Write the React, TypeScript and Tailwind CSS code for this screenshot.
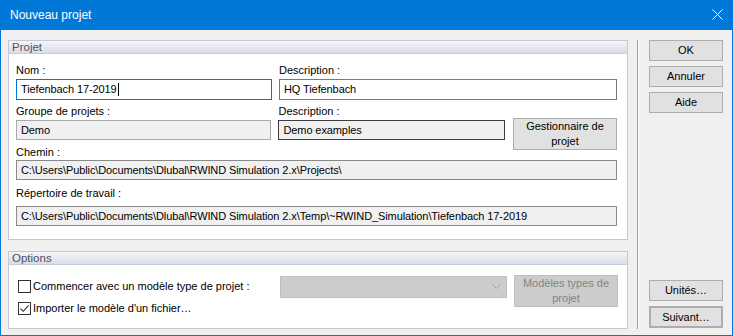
import React from "react";

const font = { fontFamily: '"Liberation Sans", Arial, sans-serif' };

function Frame({ title, className, children }: { title: string; className?: string; children: React.ReactNode }) {
  return (
    <div className={"flex flex-col border border-[#c4c8d6] bg-white " + (className ?? "")}>
      <div className="h-[13px] shrink-0 border-b border-[#c9ccd9] bg-gradient-to-b from-[#f6f6f9] to-[#dadce7] pl-[3px] text-[11.5px] leading-[13px] text-[#4f5163]">
        {title}
      </div>
      {children}
    </div>
  );
}

function Btn({ children, className }: { children: React.ReactNode; className?: string }) {
  return (
    <div className={"flex items-center justify-center border border-[#adadad] bg-[#e1e1e1] text-center text-[11px] leading-[15px] text-black " + (className ?? "")}>
      {children}
    </div>
  );
}

function Field({ children, className }: { children: React.ReactNode; className?: string }) {
  return (
    <div className={"flex items-center whitespace-nowrap pl-[4px] text-[11px] tracking-[-0.1px] text-black " + (className ?? "")}>
      {children}
    </div>
  );
}

function Label({ children, className }: { children: React.ReactNode; className?: string }) {
  return <div className={"h-[14px] text-[11px] leading-[14px] text-black " + (className ?? "")}>{children}</div>;
}

function CheckBox({ checked }: { checked?: boolean }) {
  return (
    <div className="flex h-[13px] w-[13px] shrink-0 items-center justify-center border border-[#333333] bg-white">
      {checked && (
        <svg width="11" height="11" viewBox="0 0 11 11">
          <path d="M1.5 5.5 L4.2 8.3 L9.6 2.3" fill="none" stroke="#333" strokeWidth="1.1" />
        </svg>
      )}
    </div>
  );
}

export default function App() {
  return (
    <div style={font} className="flex h-[336px] w-[733px] flex-col border-x border-b border-[#0078d7] bg-[#f0f0f0]">
      {/* Title bar */}
      <div className="flex h-[30px] shrink-0 items-center justify-between bg-[#0078d7] pl-[9px] pr-[9px] text-white">
        <span className="text-[12px] leading-[14px]">Nouveau projet</span>
        <svg width="11" height="11" viewBox="0 0 11 11" className="mb-[1px]">
          <path d="M0.5 0.5 L10.5 10.5 M10.5 0.5 L0.5 10.5" stroke="white" strokeWidth="1" />
        </svg>
      </div>

      {/* Body */}
      <div className="flex flex-1 pl-[7px] pt-[10px] pb-[6px]">
        {/* Left column */}
        <div className="flex w-[620px] flex-col">
          <Frame title="Projet" className="h-[200px]">
            <div className="flex flex-col pl-[7px] pr-[10px]">
              {/* Row 1 */}
              <div className="mt-[9px] flex gap-[7px]">
                <div className="flex w-[256px] flex-col">
                  <Label>Nom :</Label>
                  <Field className="mt-[2px] h-[21px] border border-[#0078d7] bg-white">
                    Tiefenbach 17-2019<span className="ml-[1px] inline-block h-[13px] w-[1px] bg-black" />
                  </Field>
                </div>
                <div className="flex w-[338px] flex-col">
                  <Label>Description :</Label>
                  <Field className="mt-[2px] h-[21px] border border-[#7a7a7a] bg-white">HQ Tiefenbach</Field>
                </div>
              </div>
              {/* Row 2 */}
              <div className="mt-[4px] flex h-[36px] gap-[7px]">
                <div className="flex w-[256px] flex-col">
                  <Label>Groupe de projets :</Label>
                  <Field className="mt-[2px] h-[20px] border border-[#a9a9a9] bg-[#f0f0f0]">Demo</Field>
                </div>
                <div className="flex w-[227px] flex-col">
                  <Label>Description :</Label>
                  <Field className="mt-[2px] h-[20px] border border-[#3c3c3c] bg-[#f0f0f0]">Demo examples</Field>
                </div>
                <Btn className="ml-[1px] mt-[14px] h-[32px] w-[104px] shrink-0">
                  Gestionnaire de
                  <br />
                  projet
                </Btn>
              </div>
              {/* Chemin */}
              <Label className="mt-[5px]">Chemin :</Label>
              <Field className="mt-[1px] h-[20px] border border-[#8a8a8a] bg-[#f0f0f0]">
                C:\Users\Public\Documents\Dlubal\RWIND Simulation 2.x\Projects\
              </Field>
              {/* Répertoire */}
              <Label className="mt-[6px]">Répertoire de travail :</Label>
              <Field className="mt-[6px] h-[20px] border border-[#8a8a8a] bg-[#f0f0f0]">
                C:\Users\Public\Documents\Dlubal\RWIND Simulation 2.x\Temp\~RWIND_Simulation\Tiefenbach 17-2019
              </Field>
            </div>
          </Frame>

          <Frame title="Options" className="mt-[11px] h-[78px]">
            <div className="flex pl-[9px] pt-[10px]">
              <div className="flex w-[262px] flex-col">
                <div className="flex h-[22px] items-center gap-[2px]">
                  <CheckBox />
                  <span className="text-[11px] text-black">Commencer avec un modèle type de projet :</span>
                </div>
                <div className="flex h-[22px] items-center gap-[2px]">
                  <CheckBox checked />
                  <span className="text-[11px] text-black">Importer le modèle d'un fichier…</span>
                </div>
              </div>
              <div className="mt-[1px] flex h-[22px] w-[227px] items-center justify-end border border-[#bfbfbf] bg-[#cccccc] pr-[5px]">
                <svg width="9" height="6" viewBox="0 0 9 6">
                  <path d="M0.5 0.5 L4.5 4.5 L8.5 0.5" fill="none" stroke="#a6a6a6" strokeWidth="1" />
                </svg>
              </div>
              <div className="ml-[7px] flex h-[32px] w-[104px] items-center justify-center border border-[#bfbfbf] bg-[#cccccc] text-center text-[11px] leading-[15px] text-[#838383]">
                Modèles types de
                <br />
                projet
              </div>
            </div>
          </Frame>
        </div>

        {/* Separator */}
        <div className="ml-[9px] w-[2px] border-l border-[#a0a0a0] border-r border-r-white" />

        {/* Right column */}
        <div className="ml-[10px] flex w-[74px] flex-col">
          <Btn className="h-[21px]">OK</Btn>
          <Btn className="mt-[5px] h-[21px]">Annuler</Btn>
          <Btn className="mt-[5px] h-[21px]">Aide</Btn>
          <div className="flex-1" />
          <Btn className="h-[21px]">Unités…</Btn>
          <Btn className="mt-[5px] h-[22px] border-2 border-[#0078d7]">Suivant…</Btn>
          <div className="h-[1px]" />
        </div>
      </div>
    </div>
  );
}
